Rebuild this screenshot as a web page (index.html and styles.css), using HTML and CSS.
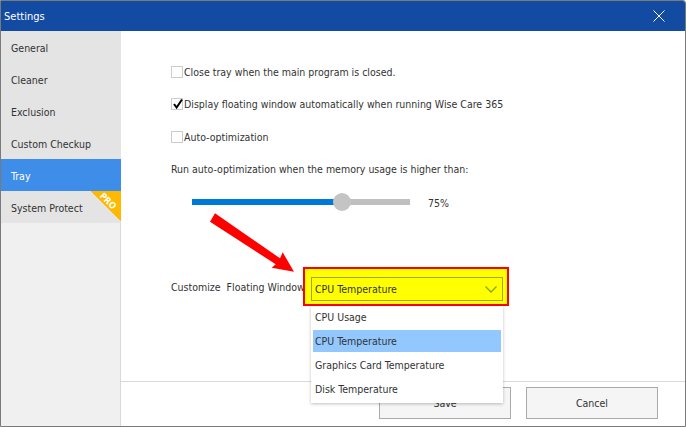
FILE: index.html
```
<!DOCTYPE html>
<html lang="en">
<head>
<meta charset="utf-8">
<title>Settings</title>
<link rel="stylesheet" href="styles.css">
</head>
<body>
<div class="window">
  <header class="titlebar">
    <span>Settings</span>
    <svg class="close" width="12" height="12" viewBox="0 0 12 12"><path d="M0.5 0.5L11.5 11.5M11.5 0.5L0.5 11.5" stroke="#fff" stroke-width="1" fill="none"/></svg>
  </header>
  <div class="body">
    <nav class="sidebar">
      <div class="nav-item">General</div>
      <div class="nav-item">Cleaner</div>
      <div class="nav-item">Exclusion</div>
      <div class="nav-item">Custom Checkup</div>
      <div class="nav-item active">Tray</div>
      <div class="nav-item">System Protect
        <div class="pro"><span>PRO</span></div>
      </div>
    </nav>
    <div class="panel">
      <main class="content">
        <label class="row"><span class="check"></span><span>Close tray when the main program is closed.</span></label>
        <label class="row"><span class="check"><svg width="12" height="12" viewBox="0 0 12 12"><path d="M2 6L4.6 9.5L10 1.5" stroke="#000" stroke-width="2" fill="none"/></svg></span><span>Display floating window automatically when running Wise Care 365</span></label>
        <label class="row third"><span class="check"></span><span>Auto-optimization</span></label>
        <div class="row"><span>Run auto-optimization when the memory usage is higher than:</span></div>
        <div class="slider-row">
          <div class="track"><div class="fill"></div><div class="thumb"></div></div>
          <span class="pct">75%</span>
        </div>
        <div class="custom-row">
          <span class="custom-label">Customize&nbsp; Floating Window</span>
          <div class="highlight">
            <div class="combo"><span>CPU Temperature</span>
              <svg width="12" height="7" viewBox="0 0 12 7"><path d="M0.5 0.5L6 6L11.5 0.5" stroke="#7fa81c" stroke-width="1.3" fill="none"/></svg>
            </div>
            <ul class="dropdown">
              <li>CPU Usage</li>
              <li class="selected">CPU Temperature</li>
              <li>Graphics Card Temperature</li>
              <li>Disk Temperature</li>
            </ul>
          </div>
        </div>
      </main>
      <footer class="footer">
        <button class="btn">Save</button>
        <button class="btn">Cancel</button>
      </footer>
    </div>
  </div>
  <svg class="arrow" width="686" height="427" viewBox="0 0 686 427"><polygon points="215,213.3 280,258.3 282.7,252.3 294,271.7 271.7,267.7 275.7,264.3 210,221.7" fill="#ff0000"/></svg>
</div>
</body>
</html>
```
FILE: styles.css
```
* { box-sizing: border-box; }
html, body { margin: 0; padding: 0; }
body { width: 686px; height: 427px; overflow: hidden; background: #fff; font-family: "DejaVu Sans Condensed", "DejaVu Sans", sans-serif; font-stretch: condensed; font-size: 10.5px; color: #333; }
.window { position: relative; width: 686px; height: 427px; display: flex; flex-direction: column; border: 1px solid #7a7a7a; border-top-right-radius: 3px; overflow: hidden; }
.titlebar { height: 30px; flex: none; background: #134ba3; color: #fff; display: flex; align-items: center; justify-content: space-between; padding: 0 20px 0 3px; font-size: 11px; }
.close { display: block; }
.body { flex: 1; display: flex; min-height: 0; }
.sidebar { width: 120px; flex: none; background: #f0f0f0; border-right: 1px solid #d9d9d9; }
.nav-item { position: relative; width: 120px; height: 32px; display: flex; align-items: center; padding: 1px 0 0 10px; background: #e4e4e4; color: #333; }
.nav-item.active { background: #3e8ee9; color: #fff; }
.pro { position: absolute; top: 0; right: 0; width: 31px; height: 31px; background: linear-gradient(45deg, transparent 50%, #ffb900 50%); }
.pro span { position: absolute; top: 10px; left: 18px; color: #fff; font-size: 9px; font-weight: 700; line-height: 10px; transform: translate(-50%, -50%) rotate(45deg); }
.panel { flex: 1; display: flex; flex-direction: column; min-width: 0; }
.content { flex: 1; padding: 25px 0 0 50px; }
.row { height: 32px; display: flex; align-items: center; }
.third { height: 33px; padding-top: 1px; }
.check { width: 12px; height: 12px; margin: -1px 1px 0 0; border: 1px solid #ccc; background: #fff; display: block; flex: none; position: relative; }
.check svg { position: absolute; left: 0; top: -1px; }
.slider-row { height: 32px; display: flex; align-items: center; padding: 1px 0 0 21px; }
.track { position: relative; width: 218px; height: 6px; background: #c0c0c0; }
.fill { width: 150px; height: 6px; background: #0078d7; }
.thumb { position: absolute; left: 141px; top: -6px; width: 18px; height: 18px; border-radius: 50%; background: #c4c4c4; }
.pct { margin-left: 18px; padding-top: 3px; }
.custom-row { display: flex; align-items: center; margin-top: 50px; }
.custom-label { width: 132px; white-space: nowrap; padding-top: 1px; }
.highlight { position: relative; width: 206px; height: 39px; border: 2px solid #ff0000; background: #ffff00; padding: 8px 4px 3px 6px; }
.combo { height: 24px; border: 1px solid #9aa828; display: flex; align-items: center; justify-content: space-between; padding: 0 5px 0 3px; }
.dropdown { position: absolute; z-index: 2; left: 6px; top: 37px; width: 192px; height: 97px; margin: 0; padding: 0 2px; list-style: none; background: #fff; box-shadow: 0 1px 3px rgba(0,0,0,.25); }
.dropdown li { height: 22px; margin-bottom: 2px; display: flex; align-items: center; padding-left: 2px; }
.dropdown li.selected { background: #93c8ff; }
.footer { height: 45px; flex: none; border-top: 1px solid #d9d9d9; display: flex; justify-content: flex-end; gap: 15px; padding: 5px 27px 0 0; }
.btn { width: 132px; height: 32px; background: #f5f5f5; border: 1px solid #aaa; font: inherit; color: #333; padding: 0; }
.arrow { position: absolute; left: -1px; top: -1px; z-index: 3; pointer-events: none; }
```
